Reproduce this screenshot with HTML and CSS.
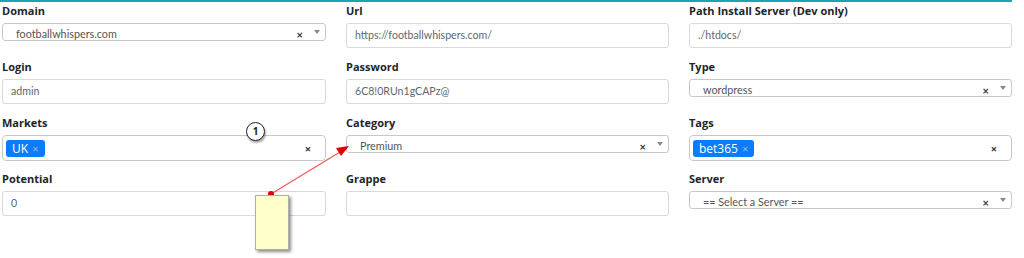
FILE: index.html
```html
<!DOCTYPE html>
<html lang="en">
<head>
    <meta charset="UTF-8">
    <title>Site</title>
    <link rel="stylesheet" href="styles.css">
</head>
<body>
    <div class="top-bar"></div>
    <div class="form-grid">
        <div class="field">
            <label>Domain</label>
            <div class="sel-box">
                <span class="sel-txt">footballwhispers.com</span>
                <span class="sel-x">×</span>
                <span class="sel-arrow"></span>
            </div>
        </div>
        <div class="field">
            <label>Url</label>
            <div class="txt-input">https://footballwhispers.com/</div>
        </div>
        <div class="field">
            <label>Path Install Server (Dev only)</label>
            <div class="txt-input">./htdocs/</div>
        </div>

        <div class="field">
            <label>Login</label>
            <div class="txt-input">admin</div>
        </div>
        <div class="field">
            <label>Password</label>
            <div class="txt-input">6C8!0RUn1gCAPz@</div>
        </div>
        <div class="field">
            <label>Type</label>
            <div class="sel-box">
                <span class="sel-txt">wordpress</span>
                <span class="sel-x">×</span>
                <span class="sel-arrow"></span>
            </div>
        </div>

        <div class="field">
            <label>Markets</label>
            <div class="tag-box">
                <span class="chip">UK <i>×</i></span>
                <span class="tag-x">×</span>
            </div>
        </div>
        <div class="field">
            <label>Category</label>
            <div class="sel-box">
                <span class="sel-txt">Premium</span>
                <span class="sel-x">×</span>
                <span class="sel-arrow"></span>
            </div>
        </div>
        <div class="field">
            <label>Tags</label>
            <div class="tag-box">
                <span class="chip">bet365 <i>×</i></span>
                <span class="tag-x">×</span>
            </div>
        </div>

        <div class="field">
            <label>Potential</label>
            <div class="txt-input">0</div>
        </div>
        <div class="field">
            <label>Grappe</label>
            <div class="txt-input"></div>
        </div>
        <div class="field">
            <label>Server</label>
            <div class="sel-box">
                <span class="sel-txt">== Select a Server ==</span>
                <span class="sel-x">×</span>
                <span class="sel-arrow"></span>
            </div>
        </div>
    </div>

    <!-- annotation overlay -->
    <div class="step-badge">1</div>
    <svg class="arrow-line" width="1024" height="258" viewBox="0 0 1024 258">
        <line x1="271" y1="194" x2="340" y2="152" stroke="#f05a5a" stroke-width="1.2"/>
        <polygon points="349,146 336,148 341,156" fill="#e00000"/>
        <circle cx="271" cy="194" r="3" fill="#e00000"/>
    </svg>
    <div class="note"></div>
</body>
</html>
```
FILE: styles.css
```css
*{margin: 0;padding: 0;box-sizing: border-box}
body{font-family: "Open Sans", "Noto Sans", sans-serif;font-size: 11px;color: #212529;background: #fff;}
.top-bar{width: 1012px;height: 3px;background: #1ba3b6;margin-top: -1px;}
.form-grid{display: grid;grid-template-columns: 324px 323px 323px;column-gap: 20px;padding: 1px 0 0 2px;width: 1012px;}
.field{height: 56px;}
.field label{display: block;font-weight: 700;line-height: 15px;margin-bottom: 5px;color: #212529;}
.txt-input{height: 25px;border: 1px solid #d6dadf;border-radius: 3px;padding: 0 8px;line-height: 23px;color: #5f676e;font-family: Lato, "Open Sans", sans-serif;font-size: 10.6px;}
.sel-box{position: relative;height: 18px;border: 1px solid #c8c8c8;border-radius: 3px;overflow: hidden;padding: 4px 0 0 13px;line-height: 12px;color: #555;font-family: Lato, "Open Sans", sans-serif;font-size: 10.8px;}
.sel-txt{display: block;}
.sel-x{position: absolute;right: 22px;top: 7px;font-weight: 700;color: #333;font-size: 11px;line-height: 8px;}
.sel-arrow{position: absolute;right: 5px;top: 6px;border-left: 3px solid transparent;border-right: 3px solid transparent;border-top: 4px solid #888;}
.tag-box{display: flex;align-items: center;height: 26px;border: 1px solid #c8c8c8;border-radius: 4px;padding: 0 14px 0 3px;}
.chip{background: #0a7cff;color: #fff;border-radius: 3px;height: 17px;line-height: 17px;padding: 0 6px;font-size: 12px;}
.chip i{font-style: normal;color: #9fb6d2;font-size: 11px;margin-left: 1px;}
.tag-x{margin-left: auto;font-weight: 700;color: #333;}
.step-badge{position: absolute;left: 246px;top: 122px;width: 19px;height: 19px;border: 1.5px solid #222;border-radius: 50%;background: #fff;text-align: center;line-height: 16px;font-weight: 700;font-size: 10px;box-shadow: 1px 2px 2px rgba(0,0,0,.35);}
.arrow-line{position: absolute;left: 0;top: 0;pointer-events: none;}
.note{position: absolute;left: 255px;top: 195px;width: 34px;height: 55px;background: #ffffcc;border: 1px solid #b0b0a0;box-shadow: 2px 2px 3px rgba(0,0,0,.45);}
```
